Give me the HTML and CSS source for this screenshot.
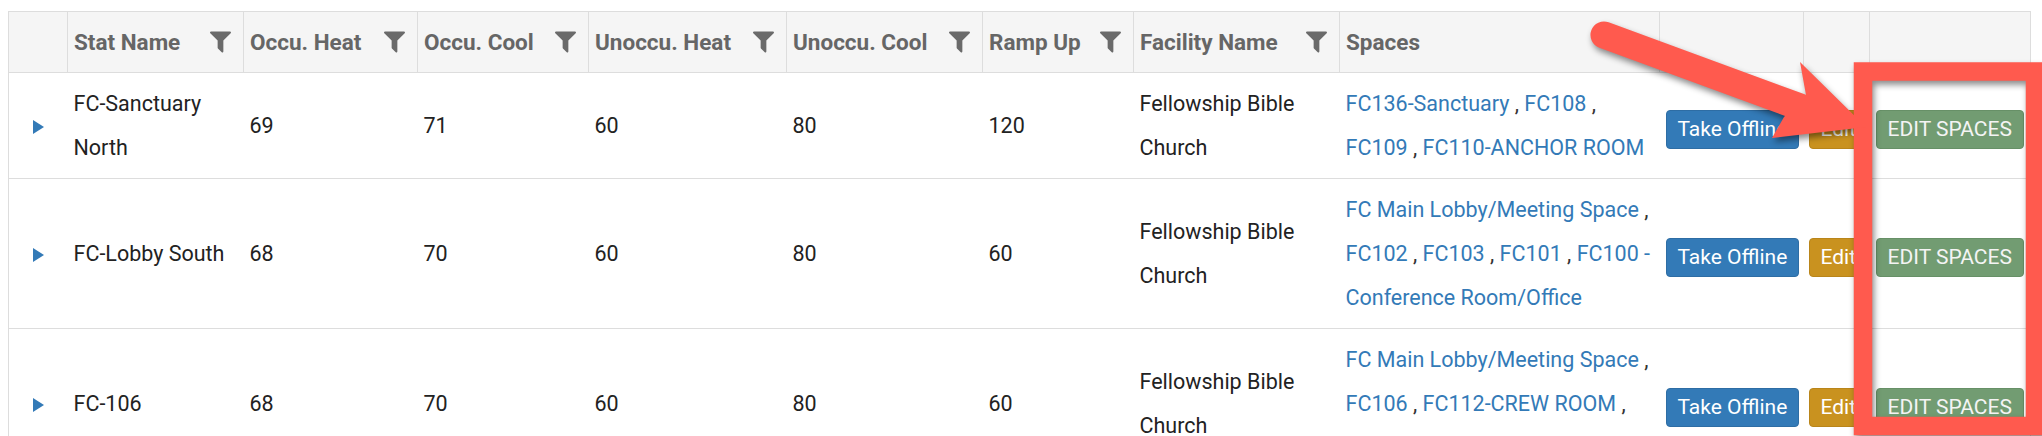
FILE: index.html
```html
<!DOCTYPE html>
<html>
<head>
<meta charset="utf-8">
<title>Stats</title>
<link rel="stylesheet" href="styles.css">
</head>
<body>
<div class="page">
<table class="grid">
  <colgroup>
    <col class="w-exp"><col class="w-name"><col class="w-oh"><col class="w-oc"><col class="w-uh"><col class="w-uc"><col class="w-ramp"><col class="w-fac"><col class="w-spaces"><col class="w-off"><col class="w-edit"><col class="w-es">
  </colgroup>
  <thead>
    <tr>
      <th></th>
      <th><div class="hd"><span>Stat Name</span><svg class="funnel" viewBox="190 250 1412 1420"><path d="M1595 295q17 41-14 70l-493 493v742q0 42-39 59-13 5-25 5-27 0-45-19l-256-256q-19-19-19-45v-486l-493-493q-31-29-14-70 17-39 59-39h1280q42 0 59 39z"/></svg></div></th>
      <th><div class="hd"><span>Occu. Heat</span><svg class="funnel" viewBox="190 250 1412 1420"><path d="M1595 295q17 41-14 70l-493 493v742q0 42-39 59-13 5-25 5-27 0-45-19l-256-256q-19-19-19-45v-486l-493-493q-31-29-14-70 17-39 59-39h1280q42 0 59 39z"/></svg></div></th>
      <th><div class="hd"><span>Occu. Cool</span><svg class="funnel" viewBox="190 250 1412 1420"><path d="M1595 295q17 41-14 70l-493 493v742q0 42-39 59-13 5-25 5-27 0-45-19l-256-256q-19-19-19-45v-486l-493-493q-31-29-14-70 17-39 59-39h1280q42 0 59 39z"/></svg></div></th>
      <th><div class="hd"><span>Unoccu. Heat</span><svg class="funnel" viewBox="190 250 1412 1420"><path d="M1595 295q17 41-14 70l-493 493v742q0 42-39 59-13 5-25 5-27 0-45-19l-256-256q-19-19-19-45v-486l-493-493q-31-29-14-70 17-39 59-39h1280q42 0 59 39z"/></svg></div></th>
      <th><div class="hd"><span>Unoccu. Cool</span><svg class="funnel" viewBox="190 250 1412 1420"><path d="M1595 295q17 41-14 70l-493 493v742q0 42-39 59-13 5-25 5-27 0-45-19l-256-256q-19-19-19-45v-486l-493-493q-31-29-14-70 17-39 59-39h1280q42 0 59 39z"/></svg></div></th>
      <th><div class="hd"><span>Ramp Up</span><svg class="funnel" viewBox="190 250 1412 1420"><path d="M1595 295q17 41-14 70l-493 493v742q0 42-39 59-13 5-25 5-27 0-45-19l-256-256q-19-19-19-45v-486l-493-493q-31-29-14-70 17-39 59-39h1280q42 0 59 39z"/></svg></div></th>
      <th><div class="hd"><span>Facility Name</span><svg class="funnel" viewBox="190 250 1412 1420"><path d="M1595 295q17 41-14 70l-493 493v742q0 42-39 59-13 5-25 5-27 0-45-19l-256-256q-19-19-19-45v-486l-493-493q-31-29-14-70 17-39 59-39h1280q42 0 59 39z"/></svg></div></th>
      <th><div class="hd"><span>Spaces</span></div></th>
      <th></th>
      <th></th>
      <th></th>
    </tr>
  </thead>
  <tbody>
    <tr>
      <td class="exp"><span class="tri"></span></td>
      <td>FC-Sanctuary North</td>
      <td>69</td>
      <td>71</td>
      <td>60</td>
      <td>80</td>
      <td>120</td>
      <td>Fellowship Bible Church</td>
      <td class="spaces"><a>FC136-Sanctuary</a> , <a>FC108</a> ,<br><a>FC109</a> , <a>FC110-ANCHOR ROOM</a></td>
      <td class="act a-off"><span class="btn btn-blue">Take Offline</span></td>
      <td class="act a-edit"><span class="btn btn-gold">Edit</span></td>
      <td class="act a-es"><span class="btn btn-green">EDIT SPACES</span></td>
    </tr>
    <tr>
      <td class="exp"><span class="tri"></span></td>
      <td>FC-Lobby South</td>
      <td>68</td>
      <td>70</td>
      <td>60</td>
      <td>80</td>
      <td>60</td>
      <td>Fellowship Bible Church</td>
      <td class="spaces"><a>FC Main Lobby/Meeting Space</a> ,<br><a>FC102</a> , <a>FC103</a> , <a>FC101</a> , <a>FC100 -<br>Conference Room/Office</a></td>
      <td class="act a-off"><span class="btn btn-blue">Take Offline</span></td>
      <td class="act a-edit"><span class="btn btn-gold">Edit</span></td>
      <td class="act a-es"><span class="btn btn-green">EDIT SPACES</span></td>
    </tr>
    <tr>
      <td class="exp"><span class="tri"></span></td>
      <td>FC-106</td>
      <td>68</td>
      <td>70</td>
      <td>60</td>
      <td>80</td>
      <td>60</td>
      <td>Fellowship Bible Church</td>
      <td class="spaces"><a>FC Main Lobby/Meeting Space</a> ,<br><a>FC106</a> , <a>FC112-CREW ROOM</a> ,<br><a>FC107</a></td>
      <td class="act a-off"><span class="btn btn-blue">Take Offline</span></td>
      <td class="act a-edit"><span class="btn btn-gold">Edit</span></td>
      <td class="act a-es"><span class="btn btn-green">EDIT SPACES</span></td>
    </tr>
  </tbody>
</table>
<svg class="annot" width="2042" height="436" viewBox="0 0 2042 436">
  <g class="mark">
    <rect x="1863" y="71.5" width="172" height="354.5" fill="none" stroke="#ff5a4e" stroke-width="18.5"/>
    <line x1="1604" y1="35" x2="1800" y2="107" stroke="#ff5a4e" stroke-width="27" stroke-linecap="round"/>
    <polygon points="1800,62 1866,127 1772,138 1784,117 1806,95" fill="#ff5a4e"/>
  </g>
</svg>
</div>
</body>
</html>
```
FILE: styles.css
```css
html, body {
  margin: 0;
  padding: 0;
  overflow: hidden;
  background: #fff;
}

.page {
  padding: 11px 0 0 8px;
  font-family: Roboto, "Liberation Sans", sans-serif;
}

.grid {
  border-collapse: collapse;
  table-layout: fixed;
  width: 2022px;
  border-left: 1px solid #dddddd;
  border-right: 1px solid #dddddd;
}

.w-exp { width: 59px; }
.w-name { width: 176px; }
.w-oh { width: 174px; }
.w-oc { width: 171px; }
.w-uh { width: 198px; }
.w-uc { width: 196px; }
.w-ramp { width: 151px; }
.w-fac { width: 206px; }
.w-spaces { width: 320px; }
.w-off { width: 144px; }
.w-edit { width: 66px; }
.w-es { width: 161px; }

.grid th {
  height: 60px;
  padding: 0 12px 0 6px;
  background: #f5f5f5;
  border: 1px solid #dddddd;
  text-align: left;
  vertical-align: middle;
  font-size: 22.5px;
  font-weight: 700;
  color: #666666;
  white-space: nowrap;
}

.hd {
  display: flex;
  align-items: center;
  justify-content: space-between;
}

.funnel {
  width: 21px;
  height: 22px;
  fill: #6a6a6a;
  flex: none;
}

.grid td {
  padding: 9px 6px 8px 6px;
  border-bottom: 1px solid #dddddd;
  font-size: 21.5px;
  line-height: 44px;
  color: #222222;
  vertical-align: middle;
}

.grid td.exp {
  padding-left: 24px;
}

.tri {
  display: inline-block;
  width: 0;
  height: 0;
  border-left: 11px solid #337ab7;
  border-top: 7px solid transparent;
  border-bottom: 7px solid transparent;
  vertical-align: middle;
}

.grid td.spaces {
  white-space: nowrap;
  padding-right: 0;
  color: #333333;
}

.spaces a {
  color: #337ab7;
}

.grid td.act {
  padding-top: 14px;
  padding-bottom: 8px;
  padding-right: 0;
  white-space: nowrap;
}

.grid td.a-off { padding-left: 6px; }
.grid td.a-edit { padding-left: 5px; }
.grid td.a-es { padding-left: 6px; }

.btn {
  display: inline-block;
  vertical-align: middle;
  font-size: 21px;
  line-height: 25px;
  padding: 6px 11px;
  border: 1px solid transparent;
  border-radius: 4px;
  color: #ffffff;
}

.btn-blue {
  background: #337ab7;
  border-color: #2e6da4;
}

.btn-gold {
  background: #c9921f;
  border-color: #b9851a;
}

.btn-green {
  background: #729c72;
  border-color: #679067;
  color: #f4f4f4;
}

.annot {
  position: absolute;
  left: 0;
  top: 0;
  pointer-events: none;
}

.mark {
  filter: drop-shadow(2px 4px 3px rgba(0, 0, 0, 0.45));
}
```
